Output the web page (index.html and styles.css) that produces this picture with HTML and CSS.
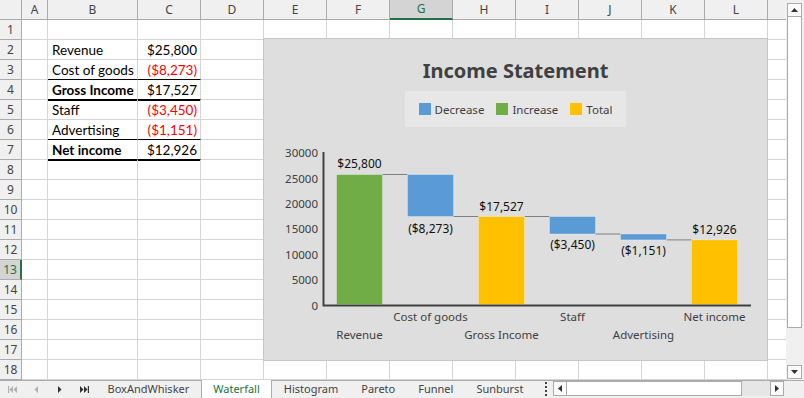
FILE: index.html
```html
<!DOCTYPE html>
<html lang="en">
<head>
    <meta charset="UTF-8">
    <title>Waterfall</title>
    <link rel="stylesheet" href="styles.css">
</head>
<body>
    <div class="app">
        <div class="main">
            <div class="sheet">
                <div class="grid" id="grid"></div>

                <div class="chart">
                    <div class="chart-title">Income Statement</div>
                    <div class="legend">
                        <div class="legend-item"><span class="swatch decrease"></span>Decrease</div>
                        <div class="legend-item"><span class="swatch increase"></span>Increase</div>
                        <div class="legend-item"><span class="swatch total"></span>Total</div>
                    </div>
                    <svg class="plot" width="503" height="221" viewBox="0 0 503 221">
                        <g class="y-labels" text-anchor="end">
                            <text x="54" y="18.2">30000</text>
                            <text x="54" y="43.6">25000</text>
                            <text x="54" y="68.9">20000</text>
                            <text x="54" y="94.3">15000</text>
                            <text x="54" y="119.7">10000</text>
                            <text x="54" y="145.1">5000</text>
                            <text x="54" y="170.5">0</text>
                        </g>

                        <!-- connectors between the running totals -->
                        <g class="connectors">
                            <line x1="118.5" y1="35.5" x2="143.5" y2="35.5"/>
                            <line x1="189.5" y1="77.5" x2="214.5" y2="77.5"/>
                            <line x1="260.5" y1="77.5" x2="285.5" y2="77.5"/>
                            <line x1="331.5" y1="95" x2="356.5" y2="95"/>
                            <line x1="402.5" y1="100.9" x2="427.5" y2="100.9"/>
                        </g>

                        <g class="bars">
                            <rect class="bar-inc" x="72.5" y="35.5" width="46" height="130"/>
                            <rect class="bar-dec" x="143.5" y="35.5" width="46" height="42"/>
                            <rect class="bar-tot" x="214.5" y="77.5" width="46" height="88"/>
                            <rect class="bar-dec" x="285.5" y="77.5" width="46" height="17.5"/>
                            <rect class="bar-dec" x="356.5" y="95" width="46" height="5.9"/>
                            <rect class="bar-tot" x="427.5" y="100.9" width="46" height="64.6"/>
                        </g>

                        <g class="data-labels" text-anchor="middle">
                            <text x="95.5" y="29">$25,800</text>
                            <text x="166.5" y="94">($8,273)</text>
                            <text x="237.5" y="72">$17,527</text>
                            <text x="308.5" y="110">($3,450)</text>
                            <text x="379.5" y="116">($1,151)</text>
                            <text x="450.5" y="94.5">$12,926</text>
                        </g>

                        <path class="axis" d="M59.5 13 V166.5 H487"/>

                        <g class="x-labels" text-anchor="middle">
                            <text x="166.5" y="182">Cost of goods</text>
                            <text x="308.5" y="182">Staff</text>
                            <text x="450.5" y="182">Net income</text>
                            <text x="95.5" y="200">Revenue</text>
                            <text x="237.5" y="200">Gross Income</text>
                            <text x="379.5" y="200">Advertising</text>
                        </g>
                    </svg>
                </div>
            </div>

            <div class="vscroll">
                <div class="sbtn">
                    <svg width="7" height="4" viewBox="0 0 7 4"><polygon points="0,4 7,4 3.5,0"/></svg>
                </div>
                <div class="vthumb"></div>
                <div class="sbtn down">
                    <svg width="7" height="4" viewBox="0 0 7 4"><polygon points="0,0 7,0 3.5,4"/></svg>
                </div>
            </div>
        </div>

        <div class="tabbar">
            <div class="nav">
                <span class="nav-btn disabled">
                    <svg width="9" height="7" viewBox="0 0 9 7"><rect x="0" y="0" width="1.2" height="7"/><polygon points="5,0 5,7 1.5,3.5"/><polygon points="9,0 9,7 5.5,3.5"/></svg>
                </span>
                <span class="nav-btn disabled">
                    <svg width="4" height="7" viewBox="0 0 4 7"><polygon points="4,0 4,7 0.5,3.5"/></svg>
                </span>
                <span class="nav-btn">
                    <svg width="4" height="7" viewBox="0 0 4 7"><polygon points="0,0 0,7 3.5,3.5"/></svg>
                </span>
                <span class="nav-btn">
                    <svg width="9" height="7" viewBox="0 0 9 7"><polygon points="0,0 0,7 3.5,3.5"/><polygon points="4,0 4,7 7.5,3.5"/><rect x="7.8" y="0" width="1.2" height="7"/></svg>
                </span>
            </div>
            <div class="tabs">
                <span class="tab">BoxAndWhisker</span>
                <span class="tab active">Waterfall</span>
                <span class="tab">Histogram</span>
                <span class="tab">Pareto</span>
                <span class="tab">Funnel</span>
                <span class="tab">Sunburst</span>
            </div>
            <div class="splitter"></div>
            <div class="hscroll">
                <div class="sbtn">
                    <svg width="4" height="7" viewBox="0 0 4 7"><polygon points="4,0 4,7 0,3.5"/></svg>
                </div>
                <div class="hthumb"></div>
                <div class="htrack"></div>
                <div class="sbtn">
                    <svg width="4" height="7" viewBox="0 0 4 7"><polygon points="0,0 0,7 4,3.5"/></svg>
                </div>
            </div>
            <div class="corner"></div>
        </div>
    </div>

    <script>
        // M is only partly in view, its letter falls outside
        const cols = ["A", "B", "C", "D", "E", "F", "G", "H", "I", "J", "K", "L", ""];
        const activeCol = "G";
        const activeRow = 13;

        // income statement rows, starting at B2
        const statement = [
            { label: "Revenue", value: "$25,800" },
            { label: "Cost of goods", value: "($8,273)", line: "thin" },
            { label: "Gross Income", value: "$17,527", bold: true, line: "thick" },
            { label: "Staff", value: "($3,450)" },
            { label: "Advertising", value: "($1,151)", line: "thin" },
            { label: "Net income", value: "$12,926", bold: true, line: "thick" }
        ];

        const grid = document.getElementById("grid");

        function addCell(className, text) {
            const cell = document.createElement("div");
            cell.className = className;
            if (text) cell.textContent = text;
            grid.appendChild(cell);
        }

        addCell("cell hdr corner");
        cols.forEach(c => addCell("cell hdr col-hdr" + (c === activeCol ? " active" : ""), c));

        for (let r = 1; r <= 18; r++) {
            addCell("cell hdr row-hdr" + (r === activeRow ? " active" : ""), String(r));
            const item = statement[r - 2];
            cols.forEach(c => {
                let cls = "cell";
                let text = "";
                if (item && (c === "B" || c === "C")) {
                    if (item.line) cls += " line-" + item.line;
                    if (c === "B") {
                        text = item.label;
                        if (item.bold) cls += " bold";
                    } else {
                        text = item.value;
                        cls += " num";
                        if (text.startsWith("(")) cls += " neg";
                    }
                }
                addCell(cls, text);
            });
        }
    </script>
</body>
</html>
```

FILE: styles.css
```css
* {
    box-sizing: border-box;
}

body {
    margin: 0;
    font-family: "Noto Sans", "Open Sans", sans-serif;
    background: #fff;
    overflow: hidden;
}

.app {
    width: 804px;
    height: 398px;
    display: flex;
    flex-direction: column;
}

.main {
    display: flex;
    height: 380px;
}

/* worksheet */
.sheet {
    position: relative;
    width: 786px;
    overflow: hidden;
}

.grid {
    display: grid;
    grid-template-columns: 22px 26px 90px repeat(11, 63px);
    grid-auto-rows: 20px;
    background: #fff;
}

.cell {
    border-right: 1px solid #d4d4d4;
    border-bottom: 1px solid #d4d4d4;
    display: flex;
    align-items: flex-end;
    padding: 0 3px 1px 4px;
    font-family: Lato, "Liberation Sans", sans-serif;
    font-size: 13.5px;
    line-height: 16px;
    color: #000;
    white-space: nowrap;
    overflow: hidden;
}

.hdr {
    background: #f0f0f0;
    border-color: #ababab;
    justify-content: center;
    align-items: center;
    padding: 0;
    font-family: "Noto Sans", sans-serif;
    font-size: 12px;
    color: #444;
}

.hdr.active {
    background: #d4d4d4;
    color: #217346;
}

.col-hdr.active {
    border-bottom: 2px solid #217346;
}

.row-hdr.active {
    border-right: 2px solid #217346;
}

.num {
    justify-content: flex-end;
}

.neg {
    color: #ff0000;
}

.bold {
    font-weight: bold;
}

.line-thin {
    border-bottom-color: #000;
}

.line-thick {
    border-bottom-color: #000;
    box-shadow: 0 1px 0 #000;
}

/* chart */
.chart {
    position: absolute;
    left: 263px;
    top: 38px;
    width: 505px;
    height: 323px;
    background: #dedede;
    border: 1px solid #c6c6c6;
    display: flex;
    flex-direction: column;
    align-items: center;
}

.chart-title {
    margin-top: 18px;
    font-size: 20px;
    font-weight: bold;
    line-height: 28px;
    color: #404040;
}

.legend {
    margin-top: 6px;
    height: 36px;
    padding: 0 14px;
    background: #e7e7e7;
    display: flex;
    align-items: center;
    gap: 12px;
    font-size: 11.5px;
    color: #404040;
}

.legend-item {
    display: flex;
    align-items: center;
    gap: 4px;
}

.swatch {
    width: 12px;
    height: 12px;
}

.swatch.decrease { background: #5b9bd5; }
.swatch.increase { background: #70ad47; }
.swatch.total { background: #ffc000; }

.plot {
    display: block;
    margin-top: 12px;
    font-family: "Noto Sans", sans-serif;
    font-size: 11.5px;
}

.y-labels, .x-labels {
    fill: #404040;
}

.data-labels {
    fill: #111;
    font-size: 12px;
}

.connectors line {
    stroke: #7f7f7f;
    stroke-width: 1;
}

.bars rect {
    stroke: rgba(255, 255, 255, 0.3);
    stroke-width: 1;
}

.bar-inc { fill: #70ad47; }
.bar-dec { fill: #5b9bd5; }
.bar-tot { fill: #ffc000; }

.axis {
    fill: none;
    stroke: #404040;
    stroke-width: 2;
}

/* scrollbars */
.vscroll {
    width: 18px;
    background: #f0f0f0;
    display: flex;
    flex-direction: column;
    padding: 3px 2px 1px 1px;
}

.sbtn {
    width: 15px;
    height: 14px;
    border: 1px solid #ababab;
    background: #fafafa;
    display: flex;
    align-items: center;
    justify-content: center;
    flex-shrink: 0;
}

.sbtn svg {
    fill: #333;
}

.vthumb {
    height: 311px;
    background: #fff;
    border: 1px solid #ababab;
    border-top: none;
}

.vscroll .down {
    margin-top: auto;
}

/* sheet tabs */
.tabbar {
    height: 18px;
    display: flex;
    background: #f0f0f0;
    border-top: 1px solid #ababab;
    font-size: 11px;
    color: #444;
}

.nav {
    width: 96px;
    display: flex;
}

.nav-btn {
    width: 24px;
    display: flex;
    align-items: center;
    justify-content: center;
    fill: #333;
}

.nav-btn.disabled {
    fill: #b0b0b0;
}

.tabs {
    width: 445px;
    display: flex;
}

.tab {
    padding: 0 11.5px;
    line-height: 16px;
    white-space: nowrap;
}

.tab.active {
    background: #fff;
    color: #217346;
    border-left: 1px solid #ababab;
    border-right: 1px solid #ababab;
    margin-top: -1px;
    line-height: 18px;
}

.splitter {
    width: 11px;
    display: flex;
    justify-content: center;
    padding: 1px 0 2px;
}

.splitter::before {
    content: "";
    width: 2px;
    border-left: 2px dotted #444;
}

.hscroll {
    width: 232px;
    display: flex;
    padding: 0 0 2px 1px;
}

.hscroll .sbtn {
    width: 14px;
    height: 15px;
}

.hthumb {
    width: 175px;
    background: #fff;
    border: 1px solid #ababab;
    border-left: none;
}

.htrack {
    flex: 1;
    background: #e6e6e6;
}

.corner {
    flex: 1;
}
```
